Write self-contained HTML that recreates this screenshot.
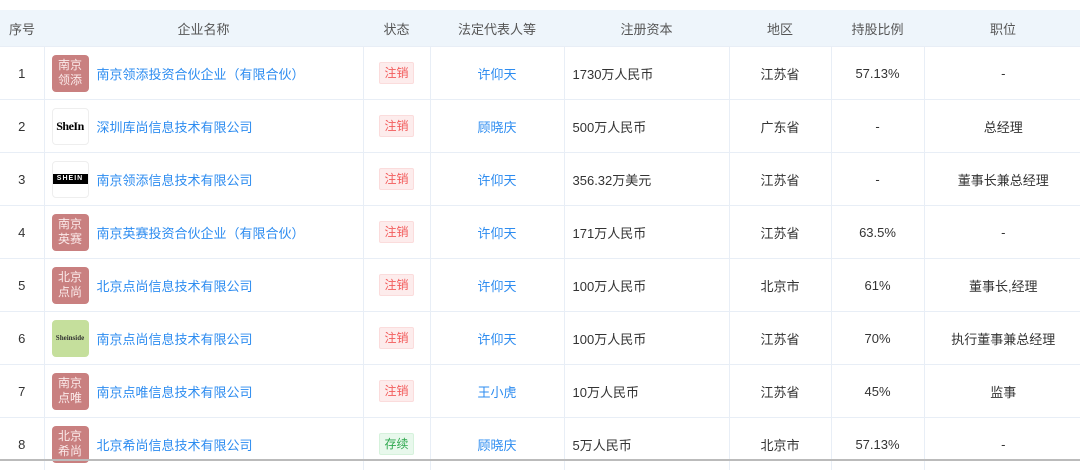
<!DOCTYPE html>
<html><head><meta charset="utf-8"><style>
body{margin:0;width:1080px;height:461px;overflow:hidden;background:#fff;font-family:"Liberation Sans","Noto Sans CJK SC",sans-serif;font-size:13px;color:#333;position:relative}
table{position:absolute;top:10px;left:0;border-collapse:collapse;table-layout:fixed;width:1082px}
th{height:36px;background:#eef5fb;font-weight:normal;color:#555;font-size:13px;padding:0}
td{height:52px;border-top:1px solid #e8eef6;border-left:1px solid #e8eef6;text-align:center;padding:0;vertical-align:middle}
td:first-child{border-left:none}
td.n{text-align:left}
.nw{display:flex;align-items:center;height:52px}
.logo{flex:none;width:37px;height:37px;border-radius:4px;margin:0 8px 0 7px;background:#c98080;color:#fbeaea;font-size:12px;line-height:15px;box-sizing:border-box;padding-top:3px;text-align:center}
.w{background:#fff;border:1px solid #eee;color:#000;padding-top:0;line-height:35px}
.a{color:#2d8cf0}
.tag{display:inline-block;font-size:12px;padding:0 4px;line-height:20px;border-radius:2px;color:#f25b5b;background:#fdecec;border:1px solid #fbdcdc}
.g{color:#2fa84f;background:#e8f8ec;border-color:#d6f2dc}
.cap{text-align:left;padding-left:8px}
.foot{position:absolute;left:0;top:459px;width:1080px;height:2px;background:#bbb}
</style></head><body>
<table>
<colgroup><col style="width:44px"><col style="width:319px"><col style="width:67px"><col style="width:134px"><col style="width:165px"><col style="width:102px"><col style="width:93px"><col style="width:158px"></colgroup>
<tr><th>序号</th><th>企业名称</th><th>状态</th><th>法定代表人等</th><th>注册资本</th><th>地区</th><th>持股比例</th><th>职位</th></tr>
<tr><td>1</td><td class="n"><div class="nw"><span class="logo">南京<br>领添</span><span class="a">南京领添投资合伙企业（有限合伙）</span></div></td><td><span class="tag">注销</span></td><td class="a">许仰天</td><td class="cap">1730万人民币</td><td>江苏省</td><td>57.13%</td><td>-</td></tr>
<tr><td>2</td><td class="n"><div class="nw"><span class="logo w" style="font-family:'Liberation Serif',serif;font-size:12px;font-weight:bold;letter-spacing:-0.5px">SheIn</span><span class="a">深圳库尚信息技术有限公司</span></div></td><td><span class="tag">注销</span></td><td class="a">顾晓庆</td><td class="cap">500万人民币</td><td>广东省</td><td>-</td><td>总经理</td></tr>
<tr><td>3</td><td class="n"><div class="nw"><span class="logo w" style="position:relative"><span style="position:absolute;left:0;top:12px;width:35px;height:10px;background:#000;color:#fff;font-size:7px;line-height:10px;font-weight:bold;letter-spacing:1px">SHEIN</span></span><span class="a">南京领添信息技术有限公司</span></div></td><td><span class="tag">注销</span></td><td class="a">许仰天</td><td class="cap">356.32万美元</td><td>江苏省</td><td>-</td><td>董事长兼总经理</td></tr>
<tr><td>4</td><td class="n"><div class="nw"><span class="logo">南京<br>英赛</span><span class="a">南京英赛投资合伙企业（有限合伙）</span></div></td><td><span class="tag">注销</span></td><td class="a">许仰天</td><td class="cap">171万人民币</td><td>江苏省</td><td>63.5%</td><td>-</td></tr>
<tr><td>5</td><td class="n"><div class="nw"><span class="logo">北京<br>点尚</span><span class="a">北京点尚信息技术有限公司</span></div></td><td><span class="tag">注销</span></td><td class="a">许仰天</td><td class="cap">100万人民币</td><td>北京市</td><td>61%</td><td>董事长,经理</td></tr>
<tr><td>6</td><td class="n"><div class="nw"><span class="logo w" style="background:#c5df9c;border-color:#c5df9c;font-family:'Liberation Serif',serif;font-size:7px;font-weight:bold;color:#333">Sheinside</span><span class="a">南京点尚信息技术有限公司</span></div></td><td><span class="tag">注销</span></td><td class="a">许仰天</td><td class="cap">100万人民币</td><td>江苏省</td><td>70%</td><td>执行董事兼总经理</td></tr>
<tr><td>7</td><td class="n"><div class="nw"><span class="logo">南京<br>点唯</span><span class="a">南京点唯信息技术有限公司</span></div></td><td><span class="tag">注销</span></td><td class="a">王小虎</td><td class="cap">10万人民币</td><td>江苏省</td><td>45%</td><td>监事</td></tr>
<tr><td>8</td><td class="n"><div class="nw"><span class="logo">北京<br>希尚</span><span class="a">北京希尚信息技术有限公司</span></div></td><td><span class="tag g">存续</span></td><td class="a">顾晓庆</td><td class="cap">5万人民币</td><td>北京市</td><td>57.13%</td><td>-</td></tr>
</table>
<div class="foot"></div>
</body></html>
